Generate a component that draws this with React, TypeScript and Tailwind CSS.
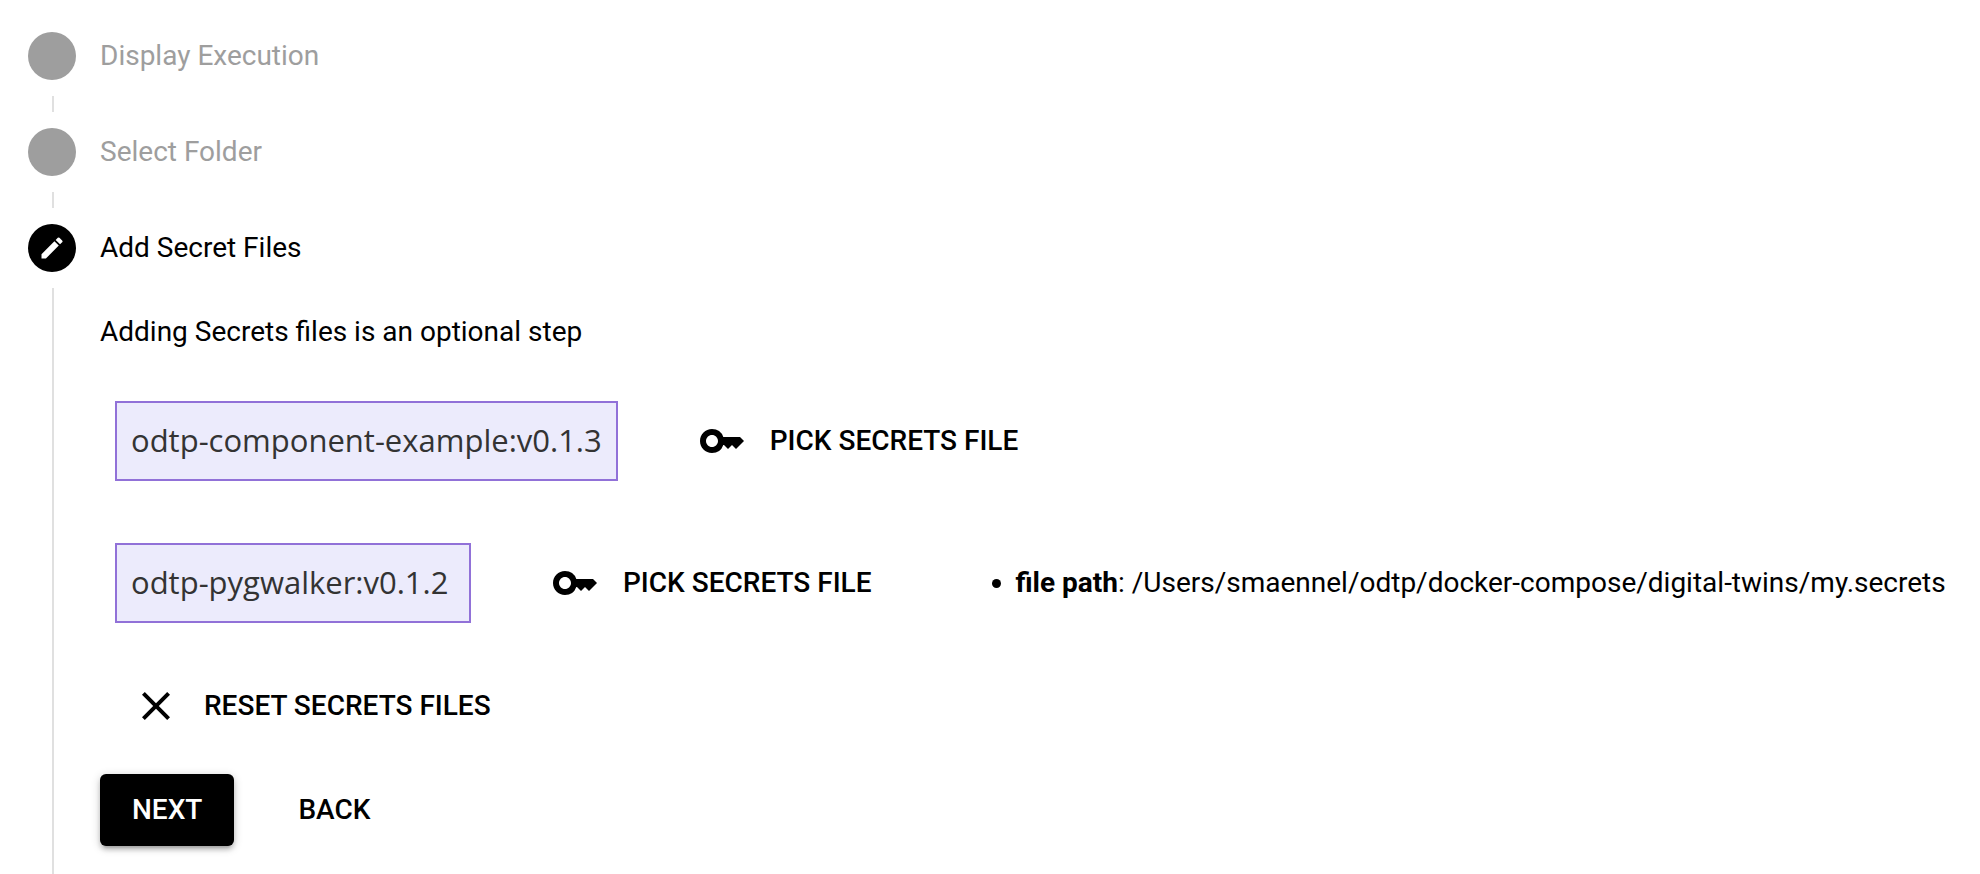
import type { ReactNode } from "react";
import { MdClose, MdEdit, MdKey } from "react-icons/md";

type StepProps = {
  title: string;
  active?: boolean;
  children?: ReactNode;
};

function Step({ title, active = false, children }: StepProps) {
  return (
    <li
      aria-current={active ? "step" : undefined}
      className={active ? "flex grow gap-6" : "flex gap-6"}
    >
      <div className="flex w-12 shrink-0 flex-col">
        <span
          className={
            active
              ? "flex size-12 items-center justify-center rounded-full bg-black text-white"
              : "size-12 rounded-full bg-[#9e9e9e]"
          }
        >
          {active && <MdEdit className="size-7" aria-hidden="true" />}
        </span>
        <span
          className={
            active
              ? "mt-4 ml-6 w-0.5 grow bg-[#e0e0e0]"
              : "my-4 ml-6 h-4 w-0.5 bg-[#e0e0e0]"
          }
        />
      </div>
      <div className="min-w-0 grow">
        <h2
          className={
            active
              ? "text-[28px] leading-[48px] text-black"
              : "text-[28px] leading-[48px] text-[#9e9e9e]"
          }
        >
          {title}
        </h2>
        {children}
      </div>
    </li>
  );
}

type FlatButtonProps = {
  icon?: ReactNode;
  children: ReactNode;
};

function FlatButton({ icon, children }: FlatButtonProps) {
  return (
    <button
      type="button"
      className="flex h-[72px] shrink-0 items-center gap-6 rounded-md px-8 text-[28px] font-medium whitespace-nowrap text-black uppercase"
    >
      {icon}
      {children}
    </button>
  );
}

type SecretRowProps = {
  component: string;
  filePath?: string;
};

function SecretRow({ component, filePath }: SecretRowProps) {
  return (
    <div className="flex items-center gap-12">
      <div className="flex h-20 min-w-[356px] shrink-0 items-center border-2 border-[#9171d8] bg-[#ecebfc] px-3.5 pb-0.5 font-['Open_Sans',sans-serif] text-[31px] whitespace-nowrap text-[#333]">
        {component}
      </div>
      <FlatButton icon={<MdKey className="size-12" aria-hidden="true" />}>
        Pick secrets file
      </FlatButton>
      {filePath && (
        <ul className="list-disc pl-16 text-[28px] leading-10 whitespace-nowrap">
          <li>
            <strong className="font-bold">file path</strong>: {filePath}
          </li>
        </ul>
      )}
    </div>
  );
}

export default function App() {
  return (
    <main className="flex min-h-screen flex-col bg-white px-7 pt-8 font-['Roboto',sans-serif] text-black">
      <ol className="flex grow flex-col">
        <Step title="Display Execution" />
        <Step title="Select Folder" />
        <Step title="Add Secret Files" active>
          <p className="mt-10 text-[28px] leading-10">
            Adding Secrets files is an optional step
          </p>
          <div className="mt-[49px] ml-[15px] flex flex-col gap-[62px]">
            <SecretRow component="odtp-component-example:v0.1.3" />
            <SecretRow
              component="odtp-pygwalker:v0.1.2"
              filePath="/Users/smaennel/odtp/docker-compose/digital-twins/my.secrets"
            />
          </div>
          <div className="mt-[47px] flex">
            <FlatButton icon={<MdClose className="size-12" aria-hidden="true" />}>
              Reset secrets files
            </FlatButton>
          </div>
          <div className="mt-8 flex gap-8">
            <button
              type="button"
              className="h-[72px] rounded-md bg-black px-8 text-[28px] font-medium text-white uppercase shadow-[0_2px_10px_rgba(0,0,0,0.2),0_4px_4px_rgba(0,0,0,0.14),0_6px_2px_-4px_rgba(0,0,0,0.12)]"
            >
              Next
            </button>
            <FlatButton>Back</FlatButton>
          </div>
        </Step>
      </ol>
    </main>
  );
}
